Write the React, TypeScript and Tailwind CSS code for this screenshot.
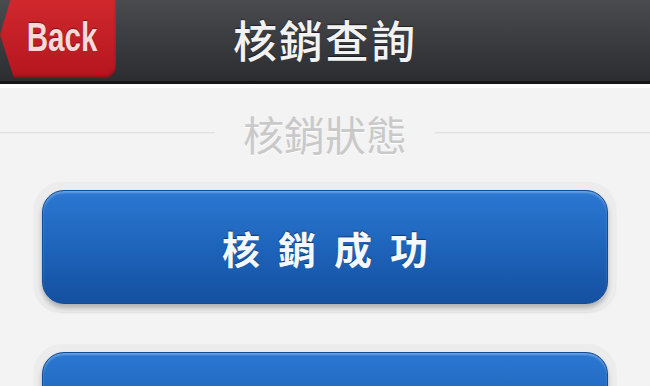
import React from "react";

const cjk = "font-['Noto_Sans_CJK_TC','Noto_Sans_CJK_SC',sans-serif]";

function Header() {
  return (
    <header className="relative h-[84px] bg-gradient-to-b from-[#4a4b4f] via-[#3b3c40] to-[#2c2d30] border-b-[3px] border-[#141414]">
      <button className="absolute left-0 top-[-12px] h-[90px] w-[116px] rounded-r-[12px] bg-gradient-to-b from-[#d52a30] to-[#b5151f] [clip-path:polygon(14px_0,100%_0,100%_100%,14px_100%,0_52%)] shadow-[inset_0_-2px_3px_rgba(0,0,0,0.25)]">
        <span className="block origin-left scale-x-[0.74] pl-[36px] pt-[8px] text-left font-['Liberation_Sans',sans-serif] text-[40px] font-bold text-[#f6dada] [text-shadow:0_-1px_1px_rgba(0,0,0,0.4)]">
          Back
        </span>
      </button>
      <h1 className={`flex h-full items-center justify-center pb-[4px] ${cjk} text-[44px] font-medium tracking-[2px] text-[#f2f2f2] [text-shadow:0_-1px_1px_rgba(0,0,0,0.5)]`}>
        核銷查詢
      </h1>
    </header>
  );
}

function SectionTitle({ label }: { label: string }) {
  return (
    <div className="flex items-center gap-[28px] pt-[20px]">
      <div className="h-[3px] flex-1 bg-gradient-to-b from-[#dcdcdc] to-[#fbfbfb]" />
      <span className={`${cjk} text-[41px] leading-[50px] text-[#c9c9c9] [text-shadow:0_1px_0_#fff]`}>
        {label}
      </span>
      <div className="h-[3px] flex-1 bg-gradient-to-b from-[#dcdcdc] to-[#fbfbfb]" />
    </div>
  );
}

function BlueButton({ label }: { label: string }) {
  return (
    <div className="mx-[34px] rounded-[28px] bg-[#ececec] p-[8px] shadow-[0_1px_2px_rgba(0,0,0,0.08)]">
      <button className="flex h-[114px] w-full items-center justify-center rounded-[22px] border border-[#0f4b96] bg-gradient-to-b from-[#2b78d2] via-[#1e64bb] to-[#14509f] shadow-[inset_0_2px_2px_rgba(255,255,255,0.3),0_4px_5px_rgba(0,0,0,0.25)]">
        <span className={`${cjk} pl-[18px] text-[38px] font-bold tracking-[18px] text-[#f4f8ff] [text-shadow:0_-1px_1px_rgba(0,0,0,0.45)]`}>
          {label}
        </span>
      </button>
    </div>
  );
}

export default function App() {
  return (
    <div className="h-[386px] w-[650px] overflow-hidden bg-[#f3f3f3]">
      <Header />
      <div className="h-[4px] bg-[#fcfcfc]" />
      <SectionTitle label="核銷狀態" />
      <div className="flex flex-col gap-[32px] pt-[24px]">
        <BlueButton label="核銷成功" />
        <BlueButton label="核銷失敗" />
      </div>
    </div>
  );
}
